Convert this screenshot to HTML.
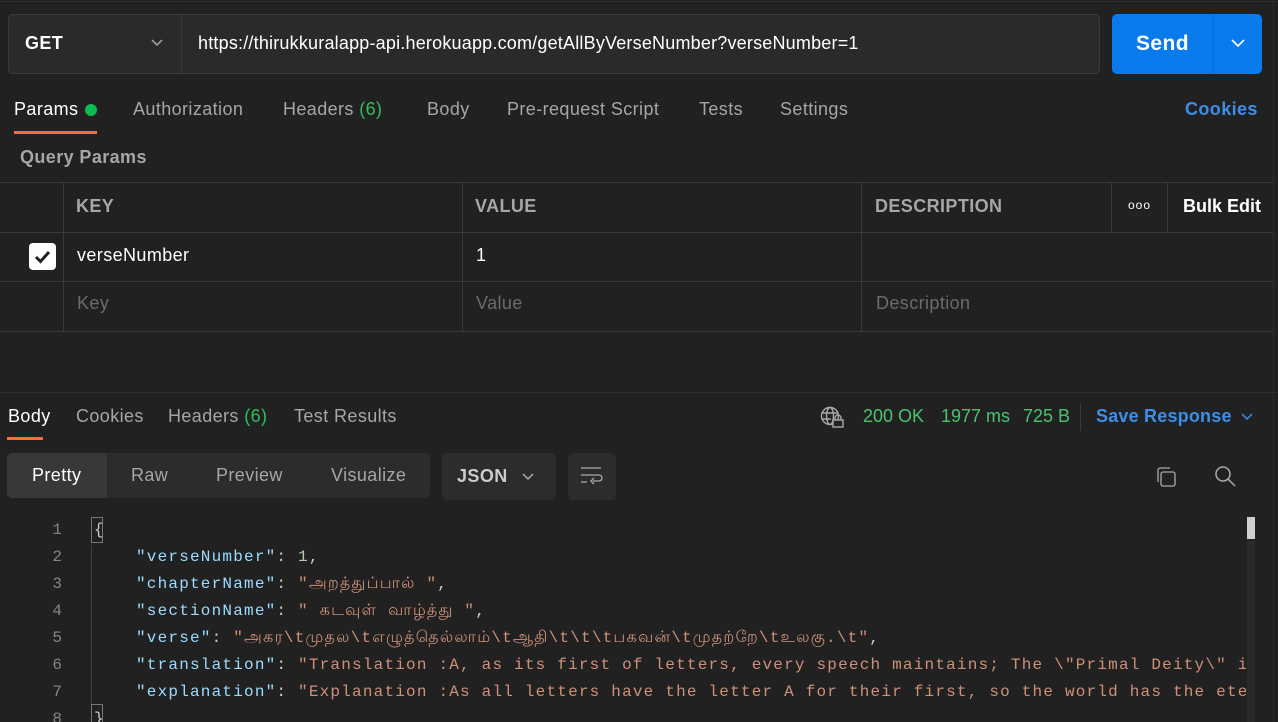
<!DOCTYPE html>
<html style="overflow:hidden;height:722px"><head><meta charset="utf-8"><style>
*{margin:0;padding:0;box-sizing:border-box}
body{width:1278px;height:722px;background:#212121;font-family:"Liberation Sans",sans-serif;color:#a6a6a6;position:relative;overflow:hidden;font-size:18px;letter-spacing:0.4px}
.a{position:absolute;white-space:nowrap}
.w{color:#fff}
.g{color:#2fbf5a}
.bl{color:#3d8ee8}
.hl{position:absolute;height:1px;background:#3a3a3a}
.vl{position:absolute;width:1px;background:#3a3a3a}
.mono{font-family:"Liberation Mono","Noto Sans CJK JP",monospace;font-size:16px;letter-spacing:1.2px}
.k{color:#9cdcfe}
.s{color:#ce9178}
.n{color:#b5cea8}
.ln{color:#858585;text-align:right;width:22px;letter-spacing:0}
</style></head><body>
<div class="hl" style="left:0;top:1px;width:1278px;background:#2e2e2e"></div>
<div class="a" style="left:8px;top:14px;width:1092px;height:60px;background:#2a2a2a;border:1px solid #3a3a3a;border-radius:5px"></div>
<div class="vl" style="left:181px;top:15px;height:58px"></div>
<div class="a w" style="left:25px;top:33px;font-weight:bold">GET</div>
<svg class="a" style="left:150px;top:38px" width="14" height="10"><path d="M2 2l5 5 5-5" stroke="#aaa" stroke-width="1.5" fill="none"/></svg>
<div class="a w" style="left:198px;top:33px;font-size:18px;letter-spacing:0.2px">https://thirukkuralapp-api.herokuapp.com/getAllByVerseNumber?verseNumber=1</div>
<div class="a" style="left:1112px;top:14px;width:150px;height:60px;background:#097bed;border-radius:5px"></div>
<div class="vl" style="left:1213px;top:14px;height:60px;background:#0a6fd4"></div>
<div class="a w" style="left:1136px;top:32px;font-weight:bold;font-size:21px">Send</div>
<svg class="a" style="left:1230px;top:38px" width="16" height="10"><path d="M2 2l6 6 6-6" stroke="#fff" stroke-width="1.6" fill="none"/></svg>

<div class="a w" style="left:14px;top:99px">Params</div>
<div class="a" style="left:85px;top:104px;width:12px;height:12px;border-radius:6px;background:#0cbb52"></div>
<div class="a" style="left:14px;top:131px;width:83px;height:3px;background:#ff6c37"></div>
<div class="a" style="left:133px;top:99px">Authorization</div>
<div class="a" style="left:283px;top:99px">Headers <span class="g">(6)</span></div>
<div class="a" style="left:427px;top:99px">Body</div>
<div class="a" style="left:507px;top:99px">Pre-request Script</div>
<div class="a" style="left:699px;top:99px">Tests</div>
<div class="a" style="left:780px;top:99px">Settings</div>
<div class="a bl" style="left:1185px;top:99px;font-weight:bold">Cookies</div>
<div class="a" style="left:20px;top:147px;font-weight:bold">Query Params</div>

<div class="hl" style="left:0;top:182px;width:1273px"></div>
<div class="hl" style="left:0;top:232px;width:1273px"></div>
<div class="hl" style="left:0;top:281px;width:1273px"></div>
<div class="hl" style="left:0;top:331px;width:1273px"></div>
<div class="vl" style="left:63px;top:182px;height:149px"></div>
<div class="vl" style="left:462px;top:182px;height:149px"></div>
<div class="vl" style="left:861px;top:182px;height:149px"></div>
<div class="vl" style="left:1111px;top:182px;height:50px"></div>
<div class="vl" style="left:1167px;top:182px;height:50px"></div>
<div class="a" style="left:76px;top:196px;font-weight:bold">KEY</div>
<div class="a" style="left:475px;top:196px;font-weight:bold">VALUE</div>
<div class="a" style="left:875px;top:196px;font-weight:bold">DESCRIPTION</div>
<div class="a w" style="left:1128px;top:198px;font-size:12px;letter-spacing:1px">ooo</div>
<div class="a w" style="left:1183px;top:196px;font-weight:bold;letter-spacing:0">Bulk Edit</div>
<div class="a" style="left:29px;top:243px;width:27px;height:27px;background:#fff;border-radius:4px"></div>
<svg class="a" style="left:29px;top:243px" width="27" height="27"><path d="M7 14l4.5 4.5L20 9" stroke="#212121" stroke-width="3" fill="none"/></svg>
<div class="a w" style="left:77px;top:245px">verseNumber</div>
<div class="a w" style="left:476px;top:245px">1</div>
<div class="a" style="left:77px;top:293px;color:#6b6b6b">Key</div>
<div class="a" style="left:476px;top:293px;color:#6b6b6b">Value</div>
<div class="a" style="left:876px;top:293px;color:#6b6b6b">Description</div>

<div class="hl" style="left:0;top:392px;width:1278px;background:#2e2e2e"></div>
<div class="a w" style="left:8px;top:406px">Body</div>
<div class="a" style="left:7px;top:437px;width:36px;height:3px;background:#ff6c37"></div>
<div class="a" style="left:76px;top:406px">Cookies</div>
<div class="a" style="left:168px;top:406px">Headers <span class="g">(6)</span></div>
<div class="a" style="left:294px;top:406px">Test Results</div>
<svg class="a" style="left:820px;top:405px" width="26" height="24" fill="none" stroke="#aaa" stroke-width="1.4"><circle cx="10" cy="11" r="8.5"/><ellipse cx="10" cy="11" rx="3.5" ry="8.5"/><path d="M2 8h16M2 14h9"/><rect x="13" y="15" width="10" height="7" fill="#212121"/><path d="M15 15v-2a3 3 0 016 0v2"/></svg>
<div class="a" style="left:863px;top:406px;color:#49c46e;letter-spacing:0">200 OK</div>
<div class="a" style="left:941px;top:406px;color:#49c46e;letter-spacing:0">1977 ms</div>
<div class="a" style="left:1023px;top:406px;color:#49c46e;letter-spacing:0">725 B</div>
<div class="vl" style="left:1080px;top:403px;height:28px"></div>
<div class="a bl" style="left:1096px;top:406px;font-weight:bold;letter-spacing:0.2px">Save Response</div>
<svg class="a" style="left:1240px;top:412px" width="14" height="10"><path d="M2 2l5 5 5-5" stroke="#3d8ee8" stroke-width="1.5" fill="none"/></svg>

<div class="a" style="left:7px;top:453px;width:423px;height:45px;background:#2c2c2c;border-radius:5px"></div>
<div class="a" style="left:7px;top:453px;width:100px;height:45px;background:#383838;border-radius:5px 0 0 5px"></div>
<div class="a w" style="left:32px;top:465px">Pretty</div>
<div class="a" style="left:131px;top:465px">Raw</div>
<div class="a" style="left:216px;top:465px">Preview</div>
<div class="a" style="left:331px;top:465px">Visualize</div>
<div class="a" style="left:442px;top:453px;width:114px;height:47px;background:#2c2c2c;border-radius:5px"></div>
<div class="a" style="left:457px;top:466px;font-weight:bold;color:#ccc">JSON</div>
<svg class="a" style="left:521px;top:472px" width="14" height="10"><path d="M2 2l5 5 5-5" stroke="#aaa" stroke-width="1.5" fill="none"/></svg>
<div class="a" style="left:568px;top:453px;width:48px;height:47px;background:#2c2c2c;border-radius:5px"></div>
<svg class="a" style="left:579px;top:465px" width="26" height="24" fill="none" stroke="#aaa" stroke-width="1.3"><path d="M2 3h20M2 10h18a3 3 0 010 6h-6M15 13l-3 3 3 3M2 17h6"/></svg>
<svg class="a" style="left:1154px;top:465px" width="24" height="24" fill="none" stroke="#aaa" stroke-width="1.3"><rect x="7" y="7" width="14" height="14" rx="2"/><path d="M4 17V5a2 2 0 012-2h10"/></svg>
<svg class="a" style="left:1213px;top:464px" width="26" height="26" fill="none" stroke="#aaa" stroke-width="1.5"><circle cx="10" cy="10" r="7"/><path d="M15 15l7 7"/></svg>

<div class="vl" style="left:91px;top:545px;height:160px;background:#404040"></div>
<div class="a" style="left:91px;top:517px;width:12px;height:26px;border:1px solid #777"></div>
<div class="a" style="left:91px;top:704px;width:12px;height:18px;border:1px solid #777;border-bottom:none"></div>
<div class="a" style="left:0;top:517px;width:1246px;height:205px;overflow:hidden">
<div class="mono a" style="left:40px;top:0;line-height:27px">
<div class="ln">1</div><div class="ln">2</div><div class="ln">3</div><div class="ln">4</div><div class="ln">5</div><div class="ln">6</div><div class="ln">7</div><div class="ln">8</div>
</div>
<div class="mono a" style="left:94px;top:0;line-height:27px;color:#ccc">
<div>{</div>
<div style="padding-left:42px"><span class="k">"verseNumber"</span>: <span class="n">1</span>,</div>
<div style="padding-left:42px"><span class="k">"chapterName"</span>: <span class="s">"அறத்துப்பால் "</span>,</div>
<div style="padding-left:42px"><span class="k">"sectionName"</span>: <span class="s">" கடவுள் வாழ்த்து "</span>,</div>
<div style="padding-left:42px"><span class="k">"verse"</span>: <span class="s">"அகர\tமுதல\tஎழுத்தெல்லாம்\tஆதி\t\t\tபகவன்\tமுதற்றே\tஉலகு.\t"</span>,</div>
<div style="padding-left:42px"><span class="k">"translation"</span>: <span class="s">"Translation :A, as its first of letters, every speech maintains; The \"Primal Deity\" is the First</span></div>
<div style="padding-left:42px"><span class="k">"explanation"</span>: <span class="s">"Explanation :As all letters have the letter A for their first, so the world has the eternal God</span></div>
<div>}</div>
</div>
</div>
<div class="a" style="left:1247px;top:517px;width:8px;height:22px;background:#cfcfcf"></div>
<div class="a" style="left:1247px;top:541px;width:8px;height:181px;background:#2a2a2a"></div>
<div class="vl" style="left:1273px;top:0;height:722px;background:#2e2e2e"></div>
</body></html>
